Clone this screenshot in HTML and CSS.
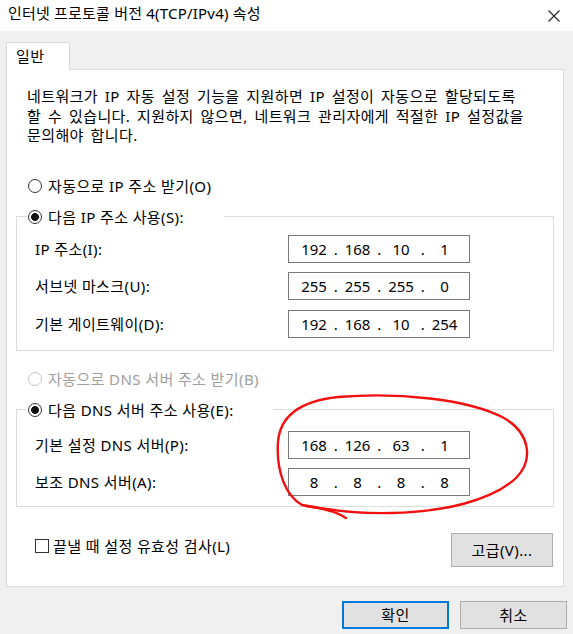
FILE: index.html
```html
<!DOCTYPE html>
<html lang="ko">
<head>
    <meta charset="UTF-8">
    <meta name="viewport" content="width=device-width, initial-scale=1.0">
    <title>인터넷 프로토콜 버전 4(TCP/IPv4) 속성</title>
    <link rel="stylesheet" href="styles.css">
</head>
<body>
    <div class="window">
        <!-- Title bar -->
        <div class="titlebar">
            <span class="title">인터넷 프로토콜 버전 4(TCP/IPv4) 속성</span>
            <svg class="close" width="12" height="12" viewBox="0 0 12 12">
                <path d="M0.5 0.5 L11.5 11.5 M11.5 0.5 L0.5 11.5" />
            </svg>
        </div>

        <div class="dialog">
            <div class="tabs">
                <div class="tab">일반</div>
            </div>

            <div class="panel">
                <p class="desc">네트워크가 IP 자동 설정 기능을 지원하면 IP 설정이 자동으로 할당되도록<br>할 수 있습니다. 지원하지 않으면, 네트워크 관리자에게 적절한 IP 설정값을<br>문의해야 합니다.</p>

                <div class="radio-row first"><span class="radio"></span>자동으로 IP 주소 받기(O)</div>

                <!-- IP group -->
                <fieldset class="group group-ip">
                    <legend class="radio-row"><span class="radio checked"></span>다음 IP 주소 사용(S):</legend>
                    <div class="fields">
                        <label>IP 주소(I):</label>
                        <div class="ipbox" data-ip="192.168.10.1"></div>
                        <label>서브넷 마스크(U):</label>
                        <div class="ipbox" data-ip="255.255.255.0"></div>
                        <label>기본 게이트웨이(D):</label>
                        <div class="ipbox" data-ip="192.168.10.254"></div>
                    </div>
                </fieldset>

                <div class="radio-row disabled"><span class="radio"></span>자동으로 DNS 서버 주소 받기(B)</div>

                <!-- DNS group -->
                <fieldset class="group group-dns">
                    <legend class="radio-row"><span class="radio checked"></span>다음 DNS 서버 주소 사용(E):</legend>
                    <div class="fields">
                        <label>기본 설정 DNS 서버(P):</label>
                        <div class="ipbox" data-ip="168.126.63.1"></div>
                        <label>보조 DNS 서버(A):</label>
                        <div class="ipbox" data-ip="8.8.8.8"></div>
                    </div>
                </fieldset>

                <div class="panel-foot">
                    <div class="check-row"><span class="checkbox"></span>끝낼 때 설정 유효성 검사(L)</div>
                    <button class="btn btn-advanced">고급(V)...</button>
                </div>
            </div>

            <div class="actions">
                <button class="btn btn-ok">확인</button>
                <button class="btn btn-cancel">취소</button>
            </div>
        </div>

        <!-- Red hand-drawn mark over the DNS fields -->
        <svg class="annotation" width="573" height="634" viewBox="0 0 573 634">
            <path d="M302 505 C286 496 276 472 278 442 C280 416 300 401 338 397 C398 392 468 399 504 418 C530 433 534 460 516 478 C492 501 442 512 392 513 C352 514 322 509 302 505" />
            <path d="M306 506 C321 508 336 511 346 518" />
        </svg>
    </div>

    <script>
        // Fill every IP box with its four octets
        document.querySelectorAll('.ipbox').forEach(box => {
            const parts = box.dataset.ip.split('.');
            box.innerHTML = parts
                .map(p => `<span class="oct">${p}</span>`)
                .join('<span class="dot">.</span>');
        });
    </script>
</body>
</html>
```

FILE: styles.css
```css
/* Global */
body {
    margin: 0;
    background: #f0f0f0;
    font-family: "Noto Sans", "Noto Sans CJK KR", sans-serif;
    font-size: 15px;
    letter-spacing: 0.4px;
    color: #000;
}

.window {
    position: relative;
    width: 573px;
    height: 634px;
    overflow: hidden;
}

/* Title bar */
.titlebar {
    height: 31px;
    box-sizing: border-box;
    background: #fff;
    display: flex;
    justify-content: space-between;
    align-items: flex-start;
    padding: 3px 13px 0 8px;
}

.title {
    line-height: 20px;
    letter-spacing: 0.2px;
}

.close {
    margin-top: 7px;
    stroke: #222;
    stroke-width: 1.1;
    fill: none;
}

/* Dialog body */
.dialog {
    padding: 11px 6px 0 6px;
}

.tabs {
    display: flex;
}

.tab {
    position: relative;
    z-index: 1;
    width: 64px;
    height: 28px;
    box-sizing: border-box;
    padding: 3px 0 0 9px;
    line-height: 20px;
    background: #fff;
    border: 1px solid #d9d9d9;
    border-bottom: none;
    margin-bottom: -1px;
}

.panel {
    background: #fff;
    border: 1px solid #d9d9d9;
    margin-right: 3px;
    padding-bottom: 19px;
}

.desc {
    margin: 0;
    padding: 17px 0 0 20px;
    line-height: 19.5px;
    word-spacing: 2.5px;
    white-space: nowrap;
}

/* Radio buttons */
.radio-row {
    display: flex;
    align-items: center;
    gap: 6px;
    line-height: 20px;
    white-space: nowrap;
}

.radio-row.first {
    margin-top: 30px;
    padding-left: 21px;
}

.radio-row.disabled {
    margin-top: 18px;
    padding-left: 21px;
    color: #a0a0a0;
}

.radio {
    width: 14px;
    height: 14px;
    box-sizing: border-box;
    border: 1px solid #333;
    border-radius: 50%;
    background: #fff;
}

.radio.checked {
    background: radial-gradient(circle, #111 0 3.6px, #fff 4.2px);
}

.radio-row.disabled .radio {
    border-color: #c4c4c4;
}

/* Group boxes */
.group {
    margin: 11px 9px 0 9px;
    padding: 0;
    border: 1px solid #dcdcdc;
    min-width: 0;
}

.group legend {
    margin-left: 9px;
    padding: 0 40px 0 2px;
}

.fields {
    display: grid;
    grid-template-columns: 253px 182px;
    align-items: center;
    padding-left: 18px;
}

.group-ip .fields {
    padding-top: 8px;
    padding-bottom: 12px;
    row-gap: 9.5px;
}

.group-dns .fields {
    padding-top: 11px;
    padding-bottom: 10px;
    row-gap: 9px;
}

.fields label {
    line-height: 20px;
    white-space: nowrap;
}

/* IP address boxes */
.ipbox {
    height: 28px;
    box-sizing: border-box;
    border: 1px solid #7a7a7a;
    display: flex;
    padding-left: 10px;
    line-height: 26px;
    letter-spacing: 0;
}

.ipbox .oct {
    width: 30px;
    text-align: center;
}

.ipbox .dot {
    width: 13.5px;
    text-align: center;
}

/* Checkbox + advanced button */
.panel-foot {
    display: flex;
    justify-content: space-between;
    align-items: flex-start;
    margin-top: 26px;
    padding: 0 10px 0 28px;
}

.check-row {
    display: flex;
    align-items: center;
    gap: 4px;
    margin-top: 3px;
    line-height: 20px;
}

.checkbox {
    width: 14px;
    height: 14px;
    box-sizing: border-box;
    border: 1px solid #333;
    background: #fff;
}

/* Buttons */
.btn {
    font-family: inherit;
    font-size: 15px;
    letter-spacing: 0.4px;
    color: #000;
    background: #e1e1e1;
    border: 1px solid #adadad;
    padding: 0;
    box-sizing: border-box;
}

.btn-advanced {
    width: 102px;
    height: 34px;
}

.actions {
    display: flex;
    justify-content: flex-end;
    gap: 11px;
    padding-top: 14px;
}

.btn-ok,
.btn-cancel {
    width: 107px;
    height: 28px;
}

.btn-ok {
    border: 2px solid #0078d7;
}

/* Red marker annotation */
.annotation {
    position: absolute;
    top: 0;
    left: 0;
    pointer-events: none;
    fill: none;
    stroke: #f01010;
    stroke-width: 2.4;
    stroke-linecap: round;
}
```
